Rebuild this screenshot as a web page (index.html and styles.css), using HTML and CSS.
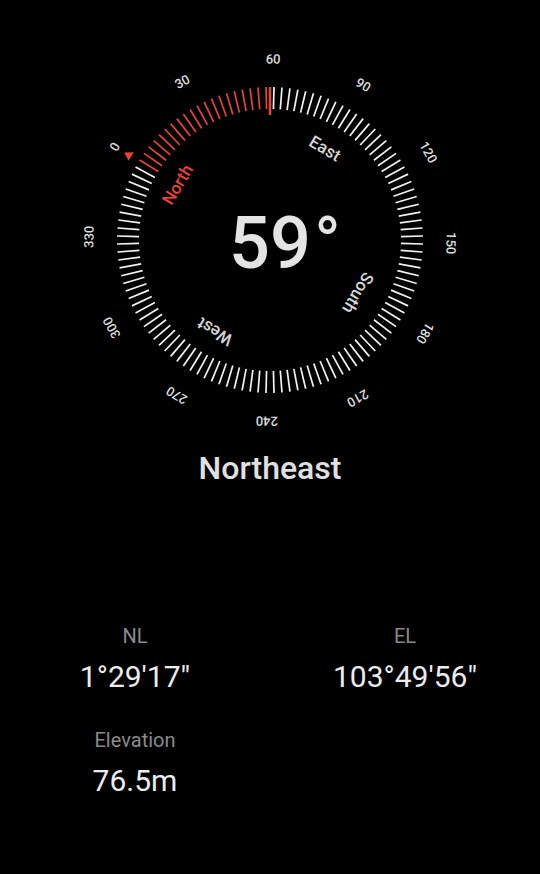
FILE: index.html
```html
<!doctype html>
<html lang="en">
  <head>
    <meta charset="UTF-8" />
    <meta name="viewport" content="width=device-width, initial-scale=1.0" />
    <title>Compass</title>
    <link rel="stylesheet" href="styles.css">
  </head>
  <body>
    <div class="compass">
      <svg class="dial" viewBox="0 0 540 440" width="540" height="440">
        <g id="ticks"></g>
        <line class="needle" x1="270" y1="87" x2="270" y2="115" />
        <polygon class="marker" points="270,70 265,78 275,78" transform="rotate(-59 270 240)" />

        <g class="nums">
          <text x="270" y="59" transform="rotate(-59 270 240)">0</text>
          <text x="270" y="59" transform="rotate(-29 270 240)">30</text>
          <text x="270" y="59" transform="rotate(1 270 240)">60</text>
          <text x="270" y="59" transform="rotate(31 270 240)">90</text>
          <text x="270" y="59" transform="rotate(61 270 240)">120</text>
          <text x="270" y="59" transform="rotate(91 270 240)">150</text>
          <text x="270" y="59" transform="rotate(121 270 240)">180</text>
          <text x="270" y="59" transform="rotate(151 270 240)">210</text>
          <text x="270" y="59" transform="rotate(181 270 240)">240</text>
          <text x="270" y="59" transform="rotate(211 270 240)">270</text>
          <text x="270" y="59" transform="rotate(241 270 240)">300</text>
          <text x="270" y="59" transform="rotate(271 270 240)">330</text>
        </g>

        <g class="cardinal">
          <text class="north" x="270" y="132" transform="rotate(-59 270 240)">North</text>
          <text x="270" y="133" transform="rotate(31 270 240)">East</text>
          <text x="270" y="137" transform="rotate(121 270 240)">South</text>
          <text x="270" y="133" transform="rotate(211 270 240)">West</text>
        </g>

        <text class="degrees" x="270" y="268">59</text>
        <text class="degree-sign" x="314" y="268">°</text>
      </svg>
    </div>

    <h1 class="direction">Northeast</h1>

    <div class="info">
      <div class="cell">
        <span class="label">NL</span>
        <span class="value">1°29'17"</span>
      </div>
      <div class="cell">
        <span class="label">EL</span>
        <span class="value">103°49'56"</span>
      </div>
      <div class="cell">
        <span class="label">Elevation</span>
        <span class="value">76.5m</span>
      </div>
    </div>

    <script>
      // 120 ticks, every 3 degrees, red from north up to the heading
      var ticks = document.getElementById("ticks");
      var ns = "http://www.w3.org/2000/svg";
      for (var i = 0; i < 120; i++) {
        var a = 1.5 + i * 3;
        var line = document.createElementNS(ns, "line");
        line.setAttribute("x1", 270);
        line.setAttribute("y1", 87);
        line.setAttribute("x2", 270);
        line.setAttribute("y2", 109);
        line.setAttribute("transform", "rotate(" + a + " 270 240)");
        line.setAttribute("class", a > 300 ? "tick red" : "tick");
        ticks.appendChild(line);
      }
    </script>
  </body>
</html>
```

FILE: styles.css
```css
body {
  margin: 0;
  background-color: #000;
  color: #e6e6e6;
  font-family: Roboto, "Noto Sans", sans-serif;
  width: 540px;
  min-height: 874px;
}

.compass {
  height: 440px;
}

.dial {
  display: block;
}

.tick {
  stroke: #f2f2f2;
  stroke-width: 1.7;
}

.tick.red {
  stroke: #e5443a;
}

.needle {
  stroke: #e5443a;
  stroke-width: 2.6;
}

.marker {
  fill: #e5443a;
}

.nums text {
  fill: #dcdcdc;
  font-size: 13px;
  font-weight: 500;
  text-anchor: middle;
  dominant-baseline: central;
}

.cardinal text {
  fill: #d6d6d6;
  font-size: 17px;
  font-weight: 500;
  text-anchor: middle;
  dominant-baseline: central;
}

.cardinal .north {
  fill: #e5443a;
}

.degrees {
  fill: #e4e4e4;
  font-size: 72px;
  font-weight: 500;
  text-anchor: middle;
}

.degree-sign {
  fill: #e4e4e4;
  font-size: 72px;
}

.direction {
  margin: 8px 0 0;
  font-size: 32px;
  line-height: 40px;
  font-weight: 500;
  text-align: center;
  color: #e0e0e0;
}

.info {
  display: grid;
  grid-template-columns: 1fr 1fr;
  row-gap: 33px;
  margin-top: 136px;
}

.cell {
  display: flex;
  flex-direction: column;
  align-items: center;
  gap: 11px;
}

.label {
  font-size: 20px;
  line-height: 24px;
  color: #8a8a8a;
}

.value {
  font-size: 30px;
  line-height: 36px;
  color: #ececec;
}
```
